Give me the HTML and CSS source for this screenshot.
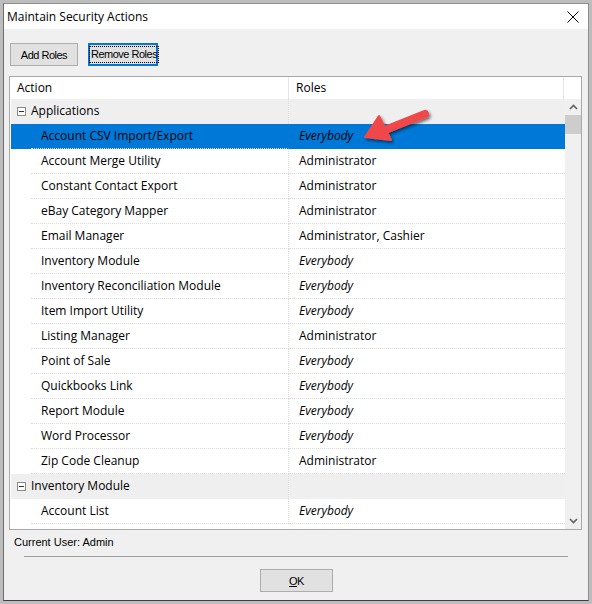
FILE: index.html
```html
<!DOCTYPE html>
<html lang="en">
<head>
    <meta charset="UTF-8">
    <title>Maintain Security Actions</title>
    <link rel="stylesheet" href="styles.css">
</head>
<body>
    <div class="window">
        <div class="titlebar">
            <span class="title">Maintain Security Actions</span>
            <svg class="close" width="12" height="12" viewBox="0 0 12 12">
                <path d="M0.5 0.5 L11.5 11.5 M11.5 0.5 L0.5 11.5" stroke="#000" stroke-width="1" fill="none"/>
            </svg>
        </div>

        <div class="content">
            <div class="toolbar">
                <button type="button" class="btn add">Add Roles</button>
                <button type="button" class="btn remove focused"><span class="focus">Remove Roles</span></button>
            </div>

            <div class="grid">
                <div class="grid-head">
                    <div class="head-action">Action</div>
                    <div class="head-roles">Roles</div>
                    <div class="head-spacer"></div>
                </div>

                <div class="grid-body">
                    <div class="rows">
                        <div class="row group">
                            <div class="cell action"><span class="toggle"></span>Applications</div>
                            <div class="cell roles"></div>
                        </div>
                        <div class="row child selected">
                            <div class="cell action">Account CSV Import/Export</div>
                            <div class="cell roles all">Everybody</div>
                        </div>
                        <div class="row child">
                            <div class="cell action">Account Merge Utility</div>
                            <div class="cell roles">Administrator</div>
                        </div>
                        <div class="row child">
                            <div class="cell action">Constant Contact Export</div>
                            <div class="cell roles">Administrator</div>
                        </div>
                        <div class="row child">
                            <div class="cell action">eBay Category Mapper</div>
                            <div class="cell roles">Administrator</div>
                        </div>
                        <div class="row child">
                            <div class="cell action">Email Manager</div>
                            <div class="cell roles">Administrator, Cashier</div>
                        </div>
                        <div class="row child">
                            <div class="cell action">Inventory Module</div>
                            <div class="cell roles all">Everybody</div>
                        </div>
                        <div class="row child">
                            <div class="cell action">Inventory Reconciliation Module</div>
                            <div class="cell roles all">Everybody</div>
                        </div>
                        <div class="row child">
                            <div class="cell action">Item Import Utility</div>
                            <div class="cell roles all">Everybody</div>
                        </div>
                        <div class="row child">
                            <div class="cell action">Listing Manager</div>
                            <div class="cell roles">Administrator</div>
                        </div>
                        <div class="row child">
                            <div class="cell action">Point of Sale</div>
                            <div class="cell roles all">Everybody</div>
                        </div>
                        <div class="row child">
                            <div class="cell action">Quickbooks Link</div>
                            <div class="cell roles all">Everybody</div>
                        </div>
                        <div class="row child">
                            <div class="cell action">Report Module</div>
                            <div class="cell roles all">Everybody</div>
                        </div>
                        <div class="row child">
                            <div class="cell action">Word Processor</div>
                            <div class="cell roles all">Everybody</div>
                        </div>
                        <div class="row child">
                            <div class="cell action">Zip Code Cleanup</div>
                            <div class="cell roles">Administrator</div>
                        </div>
                        <div class="row group">
                            <div class="cell action"><span class="toggle"></span>Inventory Module</div>
                            <div class="cell roles"></div>
                        </div>
                        <div class="row child">
                            <div class="cell action">Account List</div>
                            <div class="cell roles all">Everybody</div>
                        </div>
                    </div>

                    <div class="scrollbar">
                        <div class="arrow-btn">
                            <svg width="9" height="6" viewBox="0 0 9 6"><path d="M1 5 L4.5 1.5 L8 5" stroke="#606060" stroke-width="1.6" fill="none"/></svg>
                        </div>
                        <div class="thumb"></div>
                        <div class="track"></div>
                        <div class="arrow-btn">
                            <svg width="9" height="6" viewBox="0 0 9 6"><path d="M1 1 L4.5 4.5 L8 1" stroke="#606060" stroke-width="1.6" fill="none"/></svg>
                        </div>
                    </div>
                </div>

                <!-- red callout arrow pasted over the grid -->
                <svg class="callout" width="84" height="48" viewBox="0 0 84 48">
                    <defs>
                        <filter id="shade" x="-20%" y="-20%" width="150%" height="160%">
                            <feDropShadow dx="1.5" dy="2" stdDeviation="1.6" flood-color="#000" flood-opacity="0.55"/>
                        </filter>
                    </defs>
                    <g filter="url(#shade)" fill="#f0474b" stroke="#f0474b">
                        <path d="M70 9 L30 25" stroke-width="8" stroke-linecap="round" fill="none"/>
                        <path d="M10 32 L24 11 L36 35 Z" stroke-width="2" stroke-linejoin="round"/>
                    </g>
                </svg>
            </div>

            <div class="status">Current User: Admin</div>
            <div class="separator"></div>
            <div class="footer">
                <button type="button" class="btn ok"><u>O</u>K</button>
            </div>
        </div>
    </div>
</body>
</html>
```

FILE: styles.css
```css
body
{
    margin: 0;
    padding: 3px;
    background-color: #bdbdbd;
    font-family: "Open Sans", "Noto Sans", sans-serif;
    font-size: 12px;
    color: #000;
}

div.window
{
    width: 586px;
    height: 598px;
    box-sizing: border-box;
    border: 1px solid #8f8f8f;
    border-bottom-color: #45384c;
    border-left-color: #6e6e6e;
    display: flex;
    flex-direction: column;
}

/* 타이틀바 */
div.titlebar
{
    height: 25px;
    background-color: #fff;
    display: flex;
    align-items: center;
    justify-content: space-between;
    padding: 0 9px 0 3px;
}
div.titlebar .title
{
    font-size: 12px;
}

div.content
{
    flex: 1;
    background-color: #f0f0f0;
    padding-top: 14px;
}

/* 버튼 */
.btn
{
    height: 23px;
    box-sizing: border-box;
    background-color: #e1e1e1;
    border: 1px solid #adadad;
    font-family: "Liberation Sans", sans-serif;
    font-size: 11px;
    letter-spacing: -0.5px;
    white-space: nowrap;
    color: #000;
    padding: 0;
}
div.toolbar
{
    display: flex;
    gap: 10px;
    padding-left: 6px;
}
.btn.add
{
    width: 68px;
}
.btn.remove
{
    width: 70px;
}
.btn.focused
{
    border: 2px solid #0078d7;
}
.btn.focused .focus
{
    display: inline-block;
    outline: 1px dotted #000;
    padding: 1px 1px;
    line-height: 13px;
}

/* 그리드 */
div.grid
{
    position: relative;
    width: 573px;
    height: 454px;
    box-sizing: border-box;
    margin: 10px 0 0 5px;
    border: 1px solid #a9a9a9;
    background-color: #fff;
}
div.grid-head
{
    display: flex;
    height: 22px;
    line-height: 22px;
}
div.grid-head div
{
    box-sizing: border-box;
    padding-left: 7px;
}
div.grid-head .head-action
{
    width: 279px;
    border-right: 1px solid #e5e5e5;
}
div.grid-head .head-roles
{
    width: 275px;
    border-right: 1px solid #e5e5e5;
}
div.grid-head .head-spacer
{
    width: 17px;
}

div.grid-body
{
    display: flex;
    height: 430px;
}
div.rows
{
    width: 554px;
    padding-left: 1px;
}
div.row
{
    display: flex;
    height: 25px;
    line-height: 24px;
}
div.row .cell
{
    box-sizing: border-box;
    white-space: nowrap;
}
div.row .cell.action
{
    width: 278px;
    border-right: 1px dotted #dcdcdc;
}
div.row .cell.roles
{
    width: 276px;
    padding-left: 10px;
    border-bottom: 1px dotted #dcdcdc;
}
div.row .cell.all
{
    font-style: italic;
}

div.row.group
{
    background-color: #efefef;
}
div.row.group .cell.action
{
    padding-left: 6px;
    padding-bottom: 1px;
    display: flex;
    align-items: center;
}
div.row.group .cell.roles
{
    border-bottom: none;
}
div.row.group .toggle
{
    position: relative;
    width: 9px;
    height: 9px;
    box-sizing: border-box;
    border: 1px solid #8a8a8a;
    background-color: #fff;
    margin-right: 5px;
}
div.row.group .toggle::after
{
    content: "";
    position: absolute;
    left: 1px;
    top: 3px;
    width: 5px;
    height: 1px;
    background-color: #333;
}

div.row.child .cell.action
{
    margin-left: 20px;
    width: 258px;
    padding-left: 10px;
    border-bottom: 1px dotted #dcdcdc;
}
div.row.selected
{
    background-color: #0078d7;
}
div.row.selected .cell
{
    border-color: #0078d7;
}

/* 스크롤바 */
div.scrollbar
{
    width: 16px;
    background-color: #f0f0f0;
    display: flex;
    flex-direction: column;
}
div.scrollbar .arrow-btn
{
    height: 16px;
    display: flex;
    align-items: center;
    justify-content: center;
}
div.scrollbar .thumb
{
    height: 19px;
    background-color: #cdcdcd;
}
div.scrollbar .track
{
    flex: 1;
}

svg.callout
{
    position: absolute;
    left: 345px;
    top: 28px;
}

/* 하단 */
div.status
{
    margin-top: 4px;
    padding-left: 10px;
    height: 16px;
    line-height: 16px;
    font-family: "Liberation Sans", sans-serif;
    font-size: 11px;
}
div.separator
{
    margin: 6px 0 0 20px;
    width: 544px;
    border-top: 1px solid #a0a0a0;
}
div.footer
{
    display: flex;
    justify-content: center;
    margin-top: 12px;
}
.btn.ok
{
    width: 73px;
    margin-left: 1px;
}
```
